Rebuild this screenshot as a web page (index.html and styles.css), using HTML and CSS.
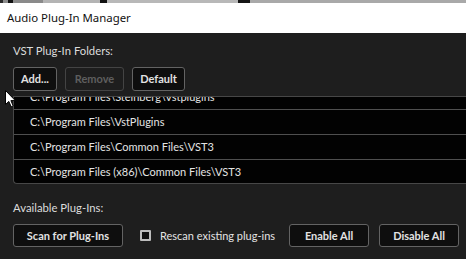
FILE: index.html
```html
<!DOCTYPE html>
<html>
<head>
<meta charset="utf-8">
<link rel="stylesheet" href="styles.css">
</head>
<body>
<div class="strip">
  <span class="s s1"></span><span class="s s2"></span><span class="s s3"></span><span class="s s4"></span><span class="s s5"></span><span class="s s6"></span><span class="s s7"></span><span class="s s8"></span><span class="s s9"></span>
</div>
<div class="titlebar">Audio Plug-In Manager</div>
<div class="panel">
  <div class="label">VST Plug-In Folders:</div>
  <div class="btnrow">
    <button class="btn w-add">Add...</button>
    <button class="btn w-remove disabled">Remove</button>
    <button class="btn w-default">Default</button>
  </div>
  <div class="list">
    <div class="rows">
      <div class="row">C:\Program Files\Steinberg\Vstplugins</div>
      <div class="row">C:\Program Files\VstPlugins</div>
      <div class="row">C:\Program Files\Common Files\VST3</div>
      <div class="row">C:\Program Files (x86)\Common Files\VST3</div>
    </div>
  </div>
  <div class="label label2">Available Plug-Ins:</div>
  <div class="btnrow btnrow2">
    <button class="btn w-scan">Scan for Plug-Ins</button>
    <label class="check"><span class="box"></span>Rescan existing plug-ins</label>
    <button class="btn w-enable">Enable All</button>
    <button class="btn w-disable">Disable All</button>
  </div>
</div>
<svg class="cursor" width="13" height="20" viewBox="0 0 13 20">
  <path d="M1.5 1.5 L1.5 15.5 L4.8 12.4 L7.2 17.8 L9.2 16.9 L6.9 11.6 L11.3 11.6 Z" fill="#fff" stroke="#000" stroke-width="1" stroke-linejoin="miter"/>
</svg>
</body>
</html>
```
FILE: styles.css
```css
* { box-sizing: border-box; }
html, body { margin: 0; padding: 0; }
body {
  width: 466px;
  height: 259px;
  overflow: hidden;
  background: #1e1e1e;
  position: relative;
  font-family: "Lato", "Liberation Sans", sans-serif;
}
.strip { display: flex; height: 3px; }
.s { display: block; height: 3px; }
.s1 { width: 3px; background: #2a2a2a; }
.s2 { width: 5px; background: #8c8c8c; }
.s3 { width: 5px; background: #111; }
.s4 { width: 30px; background: #8a8a8a; }
.s5 { width: 57px; background: #b4b4b4; }
.s6 { width: 7px; background: #111; }
.s7 { width: 131px; background: #b8b8b8; }
.s8 { width: 12px; background: #151515; }
.s9 { flex: 1; background: #a9a9a9; }
.titlebar {
  height: 30px;
  background: #fff;
  color: #111;
  font-family: "Noto Sans", "Open Sans", sans-serif;
  font-size: 11.4px;
  line-height: 30px;
  padding-left: 7px;
}
.panel { padding: 9px 0 0 13px; }
.label {
  height: 18px;
  line-height: 18px;
  font-size: 11.3px;
  color: #dcdcdc;
  white-space: nowrap;
}
.btnrow { display: flex; gap: 8px; margin-top: 7px; align-items: center; }
.btn {
  height: 24px;
  padding: 0;
  background: #0e0e0e;
  border: 1px solid #636363;
  border-radius: 3px;
  color: #e2e2e2;
  font-family: "Lato", "Liberation Sans", sans-serif;
  font-size: 11px;
  font-weight: 700;
  line-height: 22px;
  text-align: center;
  white-space: nowrap;
}
.btn.disabled { background: #1e1e1e; border-color: #444; color: #5e5e5e; }
.w-add { width: 44px; }
.w-remove { width: 59px; }
.w-default { width: 53px; }
.list {
  margin-top: 5px;
  width: 470px;
  height: 88px;
  background: #020202;
  border: 1px solid #474747;
  border-right: none;
  border-radius: 0 0 0 4px;
  overflow: hidden;
}
.rows { margin-top: -12px; }
.row {
  height: 25px;
  border-bottom: 1px solid #4f4f4f;
  padding-left: 16px;
  font-size: 11px;
  line-height: 24px;
  color: #e4e4e4;
  white-space: nowrap;
}
.label2 { margin-top: 15px; }
.btnrow2 { gap: 0; }
.w-scan { width: 110px; height: 23px; line-height: 21px; }
.check {
  display: flex;
  align-items: center;
  margin-left: 17px;
  font-size: 11px;
  color: #e4e4e4;
  white-space: nowrap;
  width: 149px;
}
.box {
  flex: none;
  width: 11px;
  height: 11px;
  border: 2px solid #bdbdbd;
  border-radius: 1px;
  background: #111;
  margin-right: 9px;
}
.w-enable { width: 80px; height: 23px; line-height: 21px; }
.w-disable { width: 80px; height: 23px; line-height: 21px; margin-left: 10px; }
.cursor { position: absolute; left: 4px; top: 89px; }
```
